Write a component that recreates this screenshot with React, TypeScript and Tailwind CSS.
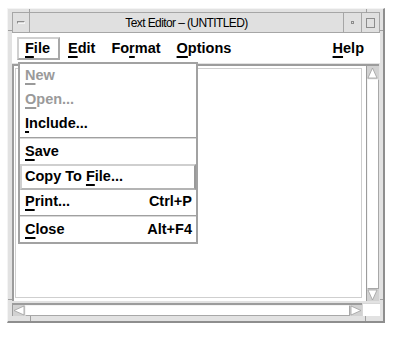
import type { ReactNode } from 'react'

type MenuEntry =
  | { sep: true }
  | { sep?: false; label: string; m: number; disabled?: boolean; accel?: string; active?: boolean }

const fileMenu: MenuEntry[] = [
  { label: 'New', m: 0, disabled: true },
  { label: 'Open...', m: 0, disabled: true },
  { label: 'Include...', m: 0 },
  { sep: true },
  { label: 'Save', m: 0 },
  { label: 'Copy To File...', m: 8, active: true },
  { label: 'Print...', m: 0, accel: 'Ctrl+P' },
  { sep: true },
  { label: 'Close', m: 0, accel: 'Alt+F4' },
]

function Mnemonic({ text, m }: { text: string; m: number }) {
  return (
    <>
      {text.slice(0, m)}
      <span className="underline decoration-2 underline-offset-[3px]">{text[m]}</span>
      {text.slice(m + 1)}
    </>
  )
}

function MenuBarItem({ text, m, open }: { text: string; m: number; open?: boolean }) {
  return (
    <div
      className={
        open
          ? 'mt-[4px] flex h-[23px] w-[43px] items-center border-2 border-t-[#d0d0d0] border-l-[#d0d0d0] border-r-[#a8a8a8] border-b-[#a8a8a8] pl-[6px]'
          : 'mt-[4px] flex h-[23px] items-center border-2 border-transparent px-[6px]'
      }
    >
      <Mnemonic text={text} m={m} />
    </div>
  )
}

function Arrow({ dir }: { dir: 'up' | 'down' | 'left' | 'right' }) {
  const pts = {
    up: '5.5,1 10,11 1,11',
    down: '1,1 10,1 5.5,11',
    left: '11,1 11,10 1,5.5',
    right: '1,1 11,5.5 1,10',
  }[dir]
  return (
    <svg width="12" height="12" viewBox="0 0 12 12" aria-hidden="true">
      <polygon points={pts} fill="#ffffff" stroke="#a0a0a0" strokeWidth="0.8" />
    </svg>
  )
}

function Notch({ className }: { className: string }) {
  return <div className={`absolute bg-[#a0a0a0] ${className}`} />
}

function FileMenu() {
  return (
    <div className="absolute left-[18px] top-[62px] w-[180px] border-2 border-[#a2a2a2] bg-white text-[14.5px] font-bold text-black">
      {fileMenu.map((item, i) => {
        if (item.sep) {
          return <div key={i} className="my-[1px] h-[2px] border-t border-b border-t-[#a0a0a0] border-b-[#d8d8d8]" />
        }
        const cls = item.active
          ? 'flex h-[26px] items-center justify-between border-2 border-t-[#cfcfcf] border-l-[#cfcfcf] border-r-[#9a9a9a] border-b-[#b4b4b4] pl-[3px] pr-[2px]'
          : 'flex h-[24px] items-center justify-between pl-[5px] pr-[4px]'
        return (
          <div key={i} className={cls}>
            <span className={item.disabled ? 'text-[#9a9a9a]' : ''}>
              <Mnemonic text={item.label} m={item.m} />
            </span>
            {item.accel && <span>{item.accel}</span>}
          </div>
        )
      })}
    </div>
  )
}

function TitleBar({ children }: { children: ReactNode }) {
  return (
    <div className="flex h-[21px] border border-[#a6a6a6] bg-[#e0e0e0]">
      <div className="flex w-[17px] items-center justify-center border-r border-[#a6a6a6]">
        <div className="h-[3px] w-[8px] border border-t-[#8c8c8c] border-l-[#8c8c8c] border-r-[#f4f4f4] border-b-[#f4f4f4] bg-[#d8d8d8]" />
      </div>
      <div className="flex flex-1 items-center justify-center text-[12px] tracking-[-0.6px] text-black">
        {children}
      </div>
      <div className="flex w-[18px] items-center justify-center border-l border-[#a6a6a6]">
        <div className="h-[3px] w-[3px] border border-[#8c8c8c]" />
      </div>
      <div className="flex w-[18px] items-center justify-center border-l border-[#a6a6a6]">
        <div className="h-[10px] w-[9px] border border-[#8c8c8c]" />
      </div>
    </div>
  )
}

export default function App() {
  return (
    <div className="relative min-h-[337px] w-[395px] bg-white pl-[7px] pt-[8px] font-['Liberation_Sans',Arial,sans-serif]">
      <div className="relative flex h-[315px] w-[378px] flex-col border-t border-l border-r-2 border-b-2 border-t-[#f4f4f4] border-l-[#f4f4f4] border-r-[#8e8e8e] border-b-[#8e8e8e] bg-[#e2e2e2] pb-[5px] pl-[4px] pr-[3px] pt-[3px]">
        {/* resize corners */}
        <Notch className="left-[21px] top-0 h-[4px] w-px" />
        <Notch className="left-0 top-[21px] h-px w-[4px]" />
        <Notch className="right-[16px] top-0 h-[4px] w-px" />
        <Notch className="right-0 top-[21px] h-px w-[3px]" />
        <Notch className="bottom-0 left-[22px] h-[5px] w-px" />
        <Notch className="bottom-[21px] left-0 h-px w-[4px]" />
        <Notch className="bottom-0 right-[17px] h-[5px] w-px" />
        <Notch className="bottom-[21px] right-0 h-px w-[3px]" />

        <TitleBar>Text Editor – (UNTITLED)</TitleBar>

        {/* menubar */}
        <div className="flex h-[30px] bg-white pl-[5px] pr-[8px] text-[14.5px] font-bold text-black">
          <MenuBarItem text="File" m={0} open />
          <MenuBarItem text="Edit" m={0} />
          <MenuBarItem text="Format" m={2} />
          <MenuBarItem text="Options" m={0} />
          <div className="flex-1" />
          <MenuBarItem text="Help" m={0} />
        </div>

        {/* work area */}
        <div className="flex flex-1 flex-col">
          <div className="flex flex-1 pt-[1px]">
            <div className="flex w-[354px] border-t-2 border-l-2 border-[#9c9c9c] bg-white pb-[3px] pl-[1px] pr-[4px] pt-[2px]">
              <div className="flex-1 border border-[#cfcfcf] bg-white" />
            </div>
            <div className="flex w-[13px] flex-col border-t-2 border-l border-[#9c9c9c] bg-[#e6e6e6]">
              <div className="flex h-[13px] items-center justify-center bg-[#d2d2d2]">
                <Arrow dir="up" />
              </div>
              <div className="flex-1 border border-t-[#f4f4f4] border-l-[#f4f4f4] border-r-[#a8a8a8] border-b-[#a8a8a8] bg-white" />
              <div className="flex h-[12px] items-center justify-center bg-[#d2d2d2]">
                <Arrow dir="down" />
              </div>
            </div>
          </div>
          <div className="flex h-[15px] pt-[2px]">
            <div className="flex w-[350px] border-t-2 border-l border-[#9c9c9c] bg-[#e6e6e6]">
              <div className="flex w-[12px] items-center justify-center bg-[#d2d2d2]">
                <Arrow dir="left" />
              </div>
              <div className="flex-1 border border-t-[#f4f4f4] border-l-[#f4f4f4] border-r-[#a8a8a8] border-b-[#a8a8a8] bg-white" />
              <div className="flex w-[12px] items-center justify-center bg-[#d2d2d2]">
                <Arrow dir="right" />
              </div>
            </div>
            <div className="flex-1 border-t border-l border-[#d8d8d8] bg-white" />
          </div>
        </div>
      </div>
      <FileMenu />
    </div>
  )
}
